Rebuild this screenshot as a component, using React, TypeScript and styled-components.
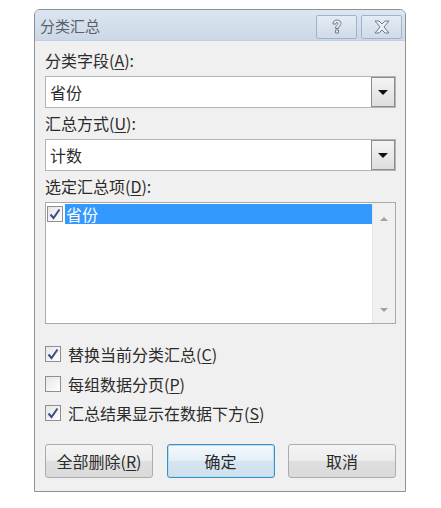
import styled, { createGlobalStyle } from "styled-components";

const GlobalStyle = createGlobalStyle`
  body {
    margin: 0;
    background: #ffffff;
    font-family: "Noto Sans CJK SC", "Noto Sans", "Liberation Sans", sans-serif;
  }
`;

const Page = styled.div`
  padding: 9px 0 0 34px;
`;

const Dialog = styled.div`
  width: 370px;
  border: 1px solid #8c9197;
  border-radius: 6px 6px 0 0;
  background: #f0f0f0;
  overflow: hidden;
`;

const TitleBar = styled.div`
  height: 31px;
  display: flex;
  align-items: center;
  justify-content: space-between;
  padding: 0 3px 0 5px;
  background: linear-gradient(#dce6f1, #cbd8e7);
  border-bottom: 1px solid #c5cfdb;
  box-sizing: border-box;
`;

const Title = styled.div`
  font-size: 15px;
  color: #5a6068;
`;

const TitleButtons = styled.div`
  display: flex;
  gap: 4px;
  padding-top: 3px;
`;

const TitleButton = styled.div`
  width: 39px;
  height: 22px;
  border: 1px solid #a3b3c6;
  border-radius: 2px;
  background: linear-gradient(#e4ecf5, #cfdbe8);
  display: flex;
  align-items: center;
  justify-content: center;
`;

const Body = styled.div`
  padding: 4px 9px 13px 10px;
`;

const FieldLabel = styled.div`
  height: 31px;
  line-height: 31px;
  font-size: 16px;
  color: #2b2b2b;
`;

const Combo = styled.div`
  height: 32px;
  box-sizing: border-box;
  border: 1px solid #b4b4b4;
  background: #ffffff;
  display: flex;
  align-items: stretch;
`;

const ComboText = styled.div`
  flex: 1;
  padding-left: 4px;
  font-size: 16px;
  line-height: 30px;
  color: #2b2b2b;
`;

const DropButton = styled.div`
  width: 22px;
  border: 1px solid #8d8d8d;
  background: linear-gradient(#f4f4f4, #dedede);
  display: flex;
  align-items: center;
  justify-content: center;
`;

const Triangle = styled.div<{ $up?: boolean; $color: string; $size: number }>`
  width: 0;
  height: 0;
  border-left: ${(p) => p.$size}px solid transparent;
  border-right: ${(p) => p.$size}px solid transparent;
  ${(p) =>
    p.$up
      ? `border-bottom: ${p.$size}px solid ${p.$color};`
      : `border-top: ${p.$size}px solid ${p.$color};`}
`;

const ListBox = styled.div`
  height: 122px;
  box-sizing: border-box;
  border: 1px solid #a9a9a9;
  background: #ffffff;
  display: flex;
`;

const ListItems = styled.div`
  flex: 1;
  padding: 1px 0 0 1px;
`;

const ListRow = styled.div`
  display: flex;
  align-items: center;
  height: 20px;
`;

const Selected = styled.div`
  flex: 1;
  height: 20px;
  margin-left: 2px;
  background: #3399ff;
  color: #ffffff;
  font-size: 16px;
  line-height: 20px;
  padding-left: 1px;
`;

const ScrollBar = styled.div`
  width: 22px;
  background: #f0f0f0;
  border-left: 1px solid #e6e6e6;
  display: flex;
  flex-direction: column;
  justify-content: space-between;
  align-items: center;
  padding: 14px 0 11px;
`;

const Box = styled.div`
  width: 16px;
  height: 16px;
  box-sizing: border-box;
  border: 1px solid #8f8f8f;
  background: linear-gradient(135deg, #e6e6e6, #ffffff);
  display: flex;
  align-items: center;
  justify-content: center;
  flex-shrink: 0;
`;

const Options = styled.div`
  padding-top: 20px;
  display: flex;
  flex-direction: column;
  gap: 9.5px;
`;

const Option = styled.div`
  height: 20px;
  display: flex;
  align-items: center;
  gap: 7px;
  font-size: 16px;
  color: #2b2b2b;
`;

const Underline = styled.span`
  text-decoration: underline;
  text-underline-offset: 2px;
`;

const Buttons = styled.div`
  display: flex;
  justify-content: space-between;
  padding-top: 21px;
`;

const Button = styled.div<{ $default?: boolean }>`
  width: 108px;
  height: 34px;
  box-sizing: border-box;
  border: 1px solid ${(p) => (p.$default ? "#3c8fc0" : "#acacac")};
  border-radius: 3px;
  background: ${(p) =>
    p.$default
      ? "linear-gradient(#f4f9fc, #e2eef6 50%, #d4e5f1 51%, #cfe1ee)"
      : "linear-gradient(#f4f4f4, #ececec 50%, #dfdfdf 51%, #dadada)"};
  box-shadow: ${(p) => (p.$default ? "inset 0 0 0 1px #b9dcf0" : "none")};
  display: flex;
  align-items: center;
  justify-content: center;
  font-size: 16px;
  color: #2b2b2b;
`;

function Check() {
  return (
    <svg width="12" height="12" viewBox="0 0 12 12">
      <path d="M1.5 6.5 L4.5 10 L10.5 1.5" fill="none" stroke="#3c4f8a" strokeWidth="2" />
    </svg>
  );
}

function HelpIcon() {
  return (
    <svg width="12" height="16" viewBox="0 0 12 16">
      <path
        d="M2 5 C2 2 4 1 6 1 C8.5 1 10 2.5 10 4.5 C10 6.5 7.5 7 7.5 9.5 L4.5 9.5 C4.5 6.5 7 6 7 4.5 C7 3.7 6.5 3.3 6 3.3 C5.3 3.3 5 3.8 5 5 Z M4.5 11 L7.5 11 L7.5 14 L4.5 14 Z"
        fill="#e8eef5"
        stroke="#6d7d91"
        strokeWidth="1"
      />
    </svg>
  );
}

function CloseIcon() {
  return (
    <svg width="16" height="14" viewBox="0 0 16 14">
      <path
        d="M1 1 L5 1 L8 4 L11 1 L15 1 L10 7 L15 13 L11 13 L8 10 L5 13 L1 13 L6 7 Z"
        fill="#e8eef5"
        stroke="#6d7d91"
        strokeWidth="1"
        strokeLinejoin="round"
      />
    </svg>
  );
}

function Dropdown({ value }: { value: string }) {
  return (
    <Combo>
      <ComboText>{value}</ComboText>
      <DropButton>
        <Triangle $color="#111" $size={5} />
      </DropButton>
    </Combo>
  );
}

function CheckOption({ checked, text, hotkey }: { checked: boolean; text: string; hotkey: string }) {
  return (
    <Option>
      <Box>{checked && <Check />}</Box>
      <span>
        {text}(<Underline>{hotkey}</Underline>)
      </span>
    </Option>
  );
}

export default function App() {
  return (
    <Page>
      <GlobalStyle />
      <Dialog>
        <TitleBar>
          <Title>分类汇总</Title>
          <TitleButtons>
            <TitleButton>
              <HelpIcon />
            </TitleButton>
            <TitleButton>
              <CloseIcon />
            </TitleButton>
          </TitleButtons>
        </TitleBar>
        <Body>
          <FieldLabel>
            分类字段(<Underline>A</Underline>):
          </FieldLabel>
          <Dropdown value="省份" />
          <FieldLabel>
            汇总方式(<Underline>U</Underline>):
          </FieldLabel>
          <Dropdown value="计数" />
          <FieldLabel>
            选定汇总项(<Underline>D</Underline>):
          </FieldLabel>
          <ListBox>
            <ListItems>
              <ListRow>
                <Box>
                  <Check />
                </Box>
                <Selected>省份</Selected>
              </ListRow>
            </ListItems>
            <ScrollBar>
              <Triangle $up $color="#a0a0a0" $size={4} />
              <Triangle $color="#a0a0a0" $size={4} />
            </ScrollBar>
          </ListBox>
          <Options>
            <CheckOption checked text="替换当前分类汇总" hotkey="C" />
            <CheckOption checked={false} text="每组数据分页" hotkey="P" />
            <CheckOption checked text="汇总结果显示在数据下方" hotkey="S" />
          </Options>
          <Buttons>
            <Button>
              全部删除(<Underline>R</Underline>)
            </Button>
            <Button $default>确定</Button>
            <Button>取消</Button>
          </Buttons>
        </Body>
      </Dialog>
    </Page>
  );
}
